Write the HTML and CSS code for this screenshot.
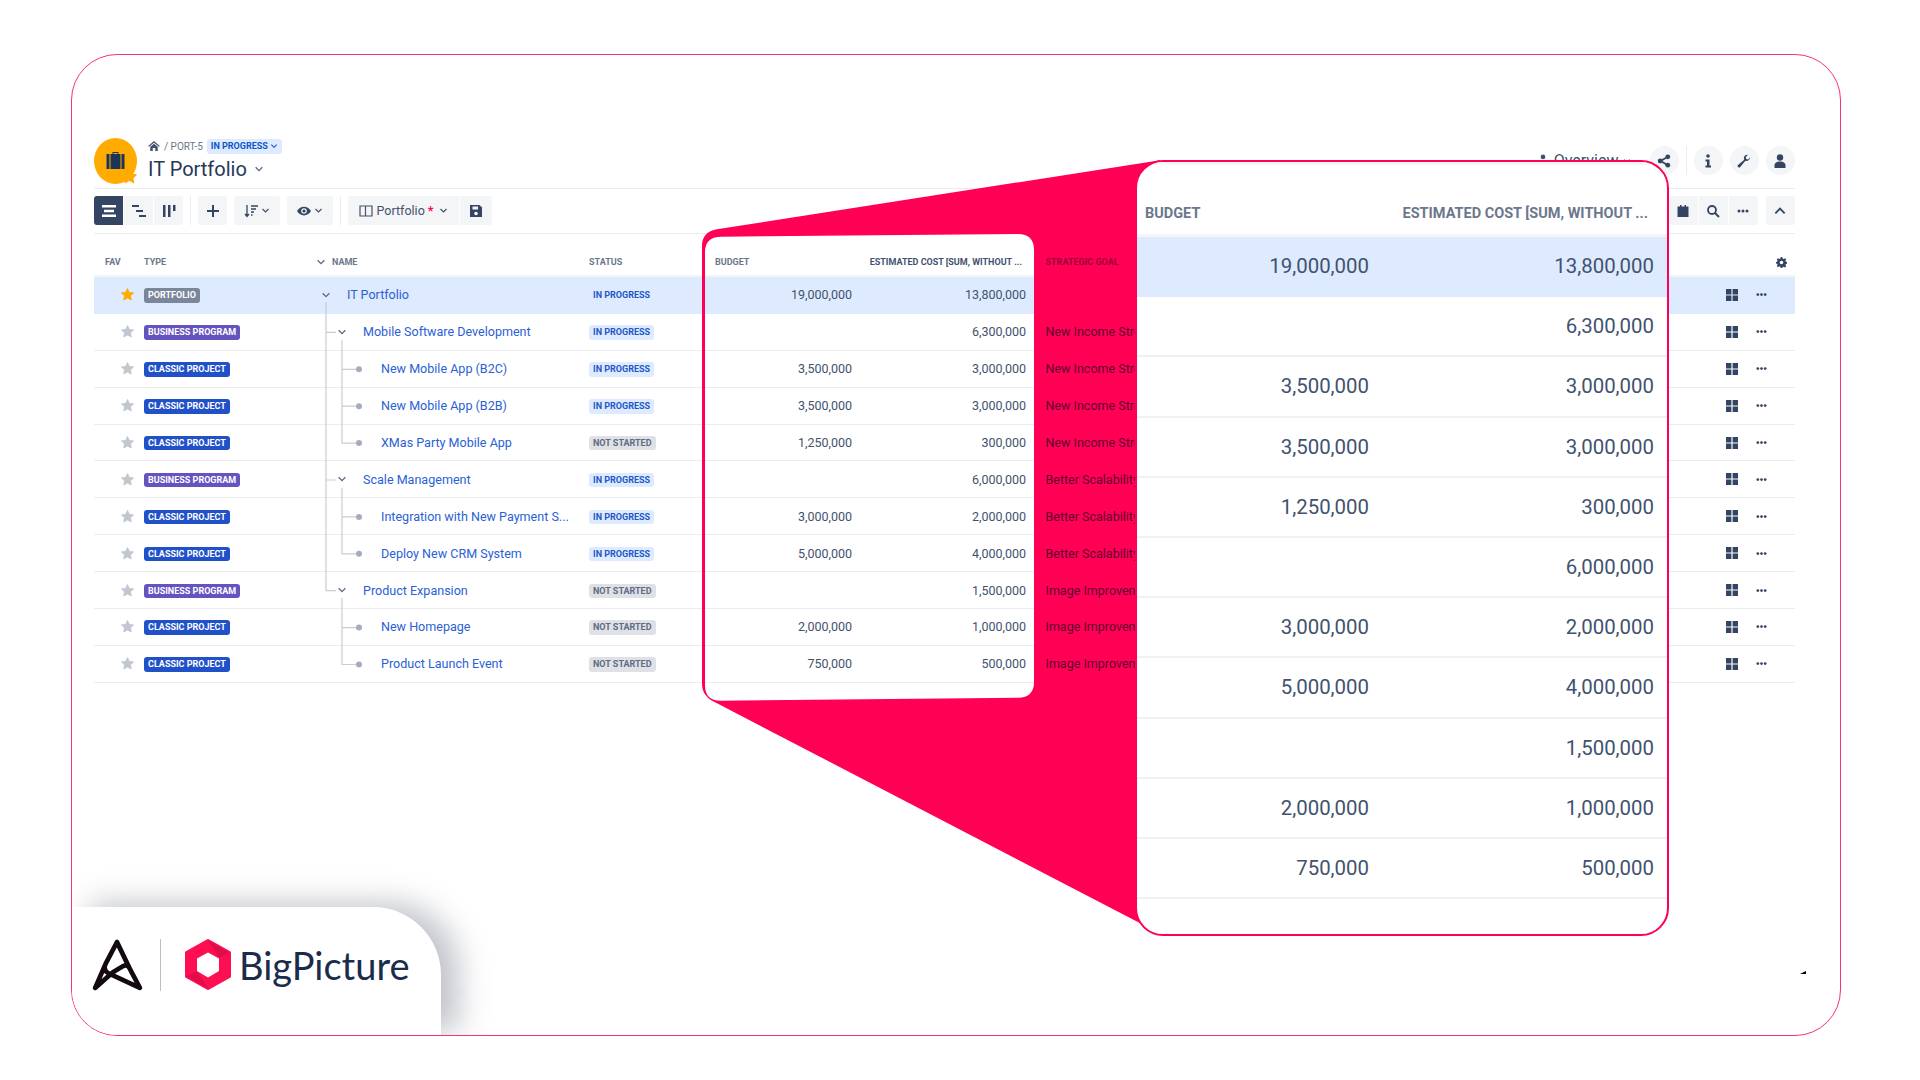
FILE: index.html
```html
<!DOCTYPE html>
<html lang="en">
<head>
  <meta charset="UTF-8">
  <title>BigPicture - IT Portfolio</title>
  <link rel="stylesheet" href="styles.css">
</head>
<body>
  <svg class="defs" width="0" height="0">
    <defs>
      <symbol id="star" viewBox="0 0 24 24"><path d="M12 2.5l2.9 6.2 6.8.8-5 4.6 1.3 6.7-6-3.4-6 3.4 1.3-6.7-5-4.6 6.8-.8z" stroke="currentColor" stroke-width="1.5" stroke-linejoin="round" fill="currentColor"/></symbol>
      <symbol id="chev" viewBox="0 0 12 12"><path d="M2 4l4 4 4-4" fill="none" stroke="currentColor" stroke-width="1.6"/></symbol>
      <symbol id="grid" viewBox="0 0 12 12"><path d="M0 0h5.4v5.4H0zM6.6 0H12v5.4H6.6zM0 6.6h5.4V12H0zM6.6 6.6H12V12H6.6z" fill="currentColor"/></symbol>
      <symbol id="dots" viewBox="0 0 12 12"><circle cx="2" cy="6" r="1.5" fill="currentColor"/><circle cx="6" cy="6" r="1.5" fill="currentColor"/><circle cx="10" cy="6" r="1.5" fill="currentColor"/></symbol>
    </defs>
  </svg>

  <div class="page">
    <div class="frame">
      <header class="top">
        <div class="avatar">
          <svg class="case" viewBox="0 0 18 18"><path d="M6 3V1h6v2h-1V2H7v1zM0 3h3v15H0zM4 3h10v15H4zM15 3h3v15h-3z" fill="#1c3557"/></svg>
          <svg class="avatar-star"><use href="#star"/></svg>
        </div>
        <div class="title-block">
          <div class="crumbs">
            <svg class="home" viewBox="0 0 14 12"><path d="M7 0l7 6-1 1-6-5-6 5-1-1zM2.5 7L7 3.2 11.5 7v5H8.5V8.500h-3V12h-3z" fill="#42526e"/></svg>
            <span>/ PORT-5</span>
            <span class="crumb-status">IN PROGRESS <svg class="ic8"><use href="#chev"/></svg></span>
          </div>
          <h1>IT Portfolio <svg class="ic10"><use href="#chev"/></svg></h1>
        </div>
        <div class="top-right">
          <span class="overview">
            <svg class="ic14" viewBox="0 0 12 12"><circle cx="6" cy="2.500" r="2" fill="#42526e"/><path d="M1 7h10v1.500H7V12H5V8.500H1z" fill="#42526e"/></svg>
            Overview <svg class="ic8"><use href="#chev"/></svg>
          </span>
          <span class="round">
            <svg viewBox="0 0 14 14"><path d="M10.500 3L3.500 7l7 4" fill="none" stroke="#344563" stroke-width="1.800"/><circle cx="10.800" cy="2.800" r="2.400" fill="#344563"/><circle cx="3.200" cy="7" r="2.400" fill="#344563"/><circle cx="10.800" cy="11.200" r="2.400" fill="#344563"/></svg>
          </span>
          <span class="vsep"></span>
          <span class="round">
            <svg viewBox="0 0 14 14"><circle cx="7" cy="2" r="1.800" fill="#344563"/><path d="M4.500 5.500H8.500V11.500H10V13.500H4.500V11.500H6V7.500H4.500z" fill="#344563"/></svg>
          </span>
          <span class="round">
            <svg viewBox="0 0 14 14"><path d="M13 3.500a3.500 3.500 0 0 1-4.600 3.300L3.300 13a1.500 1.500 0 0 1-2.300-2.100l6.200-5.200A3.500 3.500 0 0 1 11 .8L8.800 3l.4 2 2 .4L13.200 3z" fill="#344563"/></svg>
          </span>
          <span class="round">
            <svg viewBox="0 0 14 14"><circle cx="7" cy="3.500" r="3.200" fill="#344563"/><path d="M1.500 14v-2.500C1.500 8.800 4 7.500 7 7.500s5.500 1.300 5.500 4V14z" fill="#344563"/></svg>
          </span>
        </div>
      </header>

      <div class="toolbar">
        <div class="group">
          <button class="tool active"><svg viewBox="0 0 14 14"><path d="M0 1h14v2.500H0zM2 5.800h10v2.500H2zM0 10.500h14V13H0z" fill="#fff"/></svg></button>
          <button class="tool"><svg viewBox="0 0 14 14"><path d="M0 1h7v2H0zM4 6h7v2H4zM7 11h7v2H7z" fill="#344563"/></svg></button>
          <button class="tool"><svg viewBox="0 0 14 14"><path d="M1 1h2.500v12H1zM6 1h2.500v12H6zM11 1h2.500v6H11z" fill="#344563"/></svg></button>
        </div>
        <span class="vsep"></span>
        <button class="tool solo"><svg viewBox="0 0 14 14"><path d="M6 1h2v5h5v2H8v5H6V8H1V6h5z" fill="#344563"/></svg></button>
        <button class="tool wide">
          <svg viewBox="0 0 14 14"><path d="M3 1v11M1 10l2 2.500L5 10M7 2h7M7 5h5M7 8h3M7 11h1.500" fill="none" stroke="#344563" stroke-width="1.300"/></svg>
          <svg class="ic8"><use href="#chev"/></svg>
        </button>
        <button class="tool wide">
          <svg viewBox="0 0 16 14"><path d="M0 7c2-3.500 5-5 8-5s6 1.500 8 5c-2 3.500-5 5-8 5S2 10.500 0 7z" fill="#344563"/><circle cx="8" cy="7" r="3.200" fill="#f4f5f7"/><circle cx="8" cy="7" r="1.800" fill="#344563"/></svg>
          <svg class="ic8"><use href="#chev"/></svg>
        </button>
        <span class="vsep"></span>
        <div class="group">
          <button class="tool portfolio">
            <svg viewBox="0 0 14 14"><path d="M1 2h12v10H1zM6.500 2v10" fill="none" stroke="#42526e" stroke-width="1.200"/></svg>
            Portfolio <b>*</b> <svg class="ic8"><use href="#chev"/></svg>
          </button>
          <button class="tool save"><svg viewBox="0 0 14 14"><path d="M1 1h9.500L13 3.500V13H1z" fill="#344563"/><path d="M3.500 2.500h5.500v3H3.500z" fill="#f4f5f7"/><circle cx="7" cy="9.500" r="1.800" fill="#f4f5f7"/></svg></button>
        </div>
        <div class="tools-right">
          <div class="group">
            <button class="tool"><svg viewBox="0 0 14 14"><path d="M1.500 2.500H4V1h1.500v1.500h3V1H10v1.500h2.500V13h-11z" fill="#344563"/></svg></button>
            <button class="tool"><svg viewBox="0 0 14 14"><circle cx="6" cy="6" r="4" fill="none" stroke="#344563" stroke-width="1.800"/><path d="M9 9l4 4" stroke="#344563" stroke-width="2"/></svg></button>
            <button class="tool"><svg class="ic12"><use href="#dots"/></svg></button>
          </div>
          <button class="tool solo"><svg viewBox="0 0 12 12"><path d="M2 8l4-4 4 4" fill="none" stroke="#344563" stroke-width="1.600"/></svg></button>
        </div>
      </div>

      <div class="table">
        <div class="row head">
          <span class="fav-h">FAV</span>
          <span>TYPE</span>
          <span class="name-h"><svg class="ic10"><use href="#chev"/></svg> NAME</span>
          <span>STATUS</span>
          <span class="budget-h">BUDGET</span>
          <span class="num">ESTIMATED COST [SUM, WITHOUT ...</span>
          <span class="goal">STRATEGIC GOAL</span>
          <span class="acts"><svg class="gear" viewBox="0 0 14 14"><path d="M6 0h2l.4 1.800 1.500.7L11.500 1.500 13 3l-1 1.600.6 1.500L14 6.500v2l-1.400.3-.6 1.500 1 1.600-1.500 1.500-1.600-1-1.500.6L8 14H6l-.4-1.500-1.500-.6-1.600 1L1 11.400l1-1.600-.6-1.500L0 8.500v-2l1.400-.4.6-1.500L1 3l1.500-1.500 1.600 1 1.500-.7z" fill="#344563"/><circle cx="7" cy="7" r="2.200" fill="#fff"/></svg></span>
        </div>

        <div class="row selected">
          <span class="fav on"><svg><use href="#star"/></svg></span>
          <span><em class="type portfolio-t">PORTFOLIO</em></span>
          <a class="name l0"><svg class="ic10"><use href="#chev"/></svg>IT Portfolio</a>
          <span><em class="status plain">IN PROGRESS</em></span>
          <span class="num">19,000,000</span>
          <span class="num">13,800,000</span>
          <span class="goal"></span>
          <span class="acts"><svg class="ic12"><use href="#grid"/></svg><svg class="ic11"><use href="#dots"/></svg></span>
        </div>
        <div class="row">
          <span class="fav"><svg><use href="#star"/></svg></span>
          <span><em class="type program">BUSINESS PROGRAM</em></span>
          <a class="name l1"><svg class="ic10"><use href="#chev"/></svg>Mobile Software Development</a>
          <span><em class="status">IN PROGRESS</em></span>
          <span class="num"></span>
          <span class="num">6,300,000</span>
          <span class="goal">New Income Streams</span>
          <span class="acts"><svg class="ic12"><use href="#grid"/></svg><svg class="ic11"><use href="#dots"/></svg></span>
        </div>
        <div class="row">
          <span class="fav"><svg><use href="#star"/></svg></span>
          <span><em class="type project">CLASSIC PROJECT</em></span>
          <a class="name l2">New Mobile App (B2C)</a>
          <span><em class="status">IN PROGRESS</em></span>
          <span class="num">3,500,000</span>
          <span class="num">3,000,000</span>
          <span class="goal">New Income Streams</span>
          <span class="acts"><svg class="ic12"><use href="#grid"/></svg><svg class="ic11"><use href="#dots"/></svg></span>
        </div>
        <div class="row">
          <span class="fav"><svg><use href="#star"/></svg></span>
          <span><em class="type project">CLASSIC PROJECT</em></span>
          <a class="name l2">New Mobile App (B2B)</a>
          <span><em class="status">IN PROGRESS</em></span>
          <span class="num">3,500,000</span>
          <span class="num">3,000,000</span>
          <span class="goal">New Income Streams</span>
          <span class="acts"><svg class="ic12"><use href="#grid"/></svg><svg class="ic11"><use href="#dots"/></svg></span>
        </div>
        <div class="row">
          <span class="fav"><svg><use href="#star"/></svg></span>
          <span><em class="type project">CLASSIC PROJECT</em></span>
          <a class="name l2">XMas Party Mobile App</a>
          <span><em class="status todo">NOT STARTED</em></span>
          <span class="num">1,250,000</span>
          <span class="num">300,000</span>
          <span class="goal">New Income Streams</span>
          <span class="acts"><svg class="ic12"><use href="#grid"/></svg><svg class="ic11"><use href="#dots"/></svg></span>
        </div>
        <div class="row">
          <span class="fav"><svg><use href="#star"/></svg></span>
          <span><em class="type program">BUSINESS PROGRAM</em></span>
          <a class="name l1"><svg class="ic10"><use href="#chev"/></svg>Scale Management</a>
          <span><em class="status">IN PROGRESS</em></span>
          <span class="num"></span>
          <span class="num">6,000,000</span>
          <span class="goal">Better Scalability</span>
          <span class="acts"><svg class="ic12"><use href="#grid"/></svg><svg class="ic11"><use href="#dots"/></svg></span>
        </div>
        <div class="row">
          <span class="fav"><svg><use href="#star"/></svg></span>
          <span><em class="type project">CLASSIC PROJECT</em></span>
          <a class="name l2">Integration with New Payment S...</a>
          <span><em class="status">IN PROGRESS</em></span>
          <span class="num">3,000,000</span>
          <span class="num">2,000,000</span>
          <span class="goal">Better Scalability</span>
          <span class="acts"><svg class="ic12"><use href="#grid"/></svg><svg class="ic11"><use href="#dots"/></svg></span>
        </div>
        <div class="row">
          <span class="fav"><svg><use href="#star"/></svg></span>
          <span><em class="type project">CLASSIC PROJECT</em></span>
          <a class="name l2">Deploy New CRM System</a>
          <span><em class="status">IN PROGRESS</em></span>
          <span class="num">5,000,000</span>
          <span class="num">4,000,000</span>
          <span class="goal">Better Scalability</span>
          <span class="acts"><svg class="ic12"><use href="#grid"/></svg><svg class="ic11"><use href="#dots"/></svg></span>
        </div>
        <div class="row">
          <span class="fav"><svg><use href="#star"/></svg></span>
          <span><em class="type program">BUSINESS PROGRAM</em></span>
          <a class="name l1"><svg class="ic10"><use href="#chev"/></svg>Product Expansion</a>
          <span><em class="status todo">NOT STARTED</em></span>
          <span class="num"></span>
          <span class="num">1,500,000</span>
          <span class="goal">Image Improvement</span>
          <span class="acts"><svg class="ic12"><use href="#grid"/></svg><svg class="ic11"><use href="#dots"/></svg></span>
        </div>
        <div class="row">
          <span class="fav"><svg><use href="#star"/></svg></span>
          <span><em class="type project">CLASSIC PROJECT</em></span>
          <a class="name l2">New Homepage</a>
          <span><em class="status todo">NOT STARTED</em></span>
          <span class="num">2,000,000</span>
          <span class="num">1,000,000</span>
          <span class="goal">Image Improvement</span>
          <span class="acts"><svg class="ic12"><use href="#grid"/></svg><svg class="ic11"><use href="#dots"/></svg></span>
        </div>
        <div class="row">
          <span class="fav"><svg><use href="#star"/></svg></span>
          <span><em class="type project">CLASSIC PROJECT</em></span>
          <a class="name l2">Product Launch Event</a>
          <span><em class="status todo">NOT STARTED</em></span>
          <span class="num">750,000</span>
          <span class="num">500,000</span>
          <span class="goal">Image Improvement</span>
          <span class="acts"><svg class="ic12"><use href="#grid"/></svg><svg class="ic11"><use href="#dots"/></svg></span>
        </div>
      </div>

      <div class="brand">
        <svg class="appfire" viewBox="0 0 50 50"><path d="M25 3L37 28M25 3L14 24Q11 30 17 33L47 47L37 28Q35 24 31 26L21 32L4 47L14 24" fill="none" stroke="#120a10" stroke-width="4.500" stroke-linejoin="round" stroke-linecap="round"/></svg>
        <span class="brand-sep"></span>
        <svg class="hex" viewBox="0 0 46 51"><path d="M23 1.500L44.500 13.500V37.500L23 49.500L1.500 37.500V13.500z" fill="#ff0f52" stroke="#ff0f52" stroke-width="3" stroke-linejoin="round"/><path d="M23 1.500L44.500 13.500L34 19zM1.500 37.500L12 32l11 17.500z" fill="#e00d4a"/><path d="M23 13.500L34 19.500V32L23 38.500L12 32V19.500z" fill="#fff"/></svg>
        <span class="brand-name">BigPicture</span>
      </div>
    </div>

    <svg class="tree" viewBox="0 0 1920 1080">
      <g fill="none" stroke="#c8ccd4" stroke-width="1.200">
        <path d="M326 302V590.700H336M326 332.400H336M326 480H336"/>
        <path d="M342 340V443.100H356M342 369.300H356M342 406.200H356"/>
        <path d="M342 488V553.800H356M342 516.900H356"/>
        <path d="M342 598V664.500H356M342 627.600H356"/>
      </g>
      <g fill="#a5adba">
        <circle cx="359" cy="369.300" r="3"/><circle cx="359" cy="406.200" r="3"/><circle cx="359" cy="443.100" r="3"/>
        <circle cx="359" cy="516.900" r="3"/><circle cx="359" cy="553.800" r="3"/>
        <circle cx="359" cy="627.600" r="3"/><circle cx="359" cy="664.500" r="3"/>
      </g>
    </svg>

    <svg class="funnel" viewBox="0 0 1920 1080">
      <path fill-rule="evenodd" fill="#ff0055" d="M717 229.300L1157 160.700L1160 160V934L1147 926.700L717 703.300Q702 697 702 684V246Q702 232 717 229.300ZM721 236.700Q705 237 705 252V685Q705 701 721 700.700L1018 697.700Q1034 697.500 1034 682V250Q1034 234 1018 234Z"/>
    </svg>

    <div class="lens">
      <div class="lens-head">
        <span>BUDGET</span>
        <span class="lens-cost">ESTIMATED COST [SUM, WITHOUT ...</span>
      </div>
      <div class="lens-row selected"><span>19,000,000</span><span>13,800,000</span></div>
      <div class="lens-row"><span></span><span>6,300,000</span></div>
      <div class="lens-row"><span>3,500,000</span><span>3,000,000</span></div>
      <div class="lens-row"><span>3,500,000</span><span>3,000,000</span></div>
      <div class="lens-row"><span>1,250,000</span><span>300,000</span></div>
      <div class="lens-row"><span></span><span>6,000,000</span></div>
      <div class="lens-row"><span>3,000,000</span><span>2,000,000</span></div>
      <div class="lens-row"><span>5,000,000</span><span>4,000,000</span></div>
      <div class="lens-row"><span></span><span>1,500,000</span></div>
      <div class="lens-row"><span>2,000,000</span><span>1,000,000</span></div>
      <div class="lens-row"><span>750,000</span><span>500,000</span></div>
    </div>

    <span class="speck"></span>
  </div>
</body>
</html>
```

FILE: styles.css
```css
* { box-sizing: border-box; }
html, body { margin: 0; height: 100%; overflow: hidden; background: #fff; }
body { font-family: Roboto, "Liberation Sans", sans-serif; color: #42526e; }
.defs { position: absolute; }
.page { position: relative; width: 1920px; height: 1080px; padding: 54px 79px 0 71px; }

.frame {
  position: relative;
  height: 982px;
  padding: 83px 45.500px 0 22px;
  border: 1.5px solid #f8336f;
  border-radius: 46px;
  overflow: hidden;
}

/* top bar */
.top { display: flex; height: 51px; border-bottom: 1px solid #ebecf0; }
.avatar { position: relative; width: 43px; height: 46px; border-radius: 50%; background: #ffab00; display: flex; align-items: center; justify-content: center; }
.case { width: 19px; height: 18px; margin-top: -3px; }
.avatar-star { position: absolute; right: -1px; bottom: -1px; width: 17px; height: 17px; color: #ffab00; }
.title-block { margin-left: 11px; }
.crumbs { display: flex; align-items: center; gap: 4px; height: 16px; font-size: 10px; color: #6b778c; }
.home { width: 12px; height: 10px; }
.crumb-status { display: flex; align-items: center; gap: 2px; height: 15px; padding: 0 4px; border-radius: 3px; background: #deebff; color: #0b55cf; font-size: 9px; font-weight: 700; white-space: nowrap; }
h1 { display: flex; align-items: center; gap: 7px; margin: 2px 0 0; font-size: 20px; line-height: 26px; font-weight: 400; color: #253858; }
.ic8 { width: 8px; height: 8px; }
.ic10 { width: 10px; height: 10px; color: #5e6c84; flex: none; }
.ic11 { width: 11px; height: 11px; color: #344563; }
.ic12 { width: 12px; height: 12px; color: #344563; }
.ic14 { width: 14px; height: 14px; }
.top-right { display: flex; align-items: center; gap: 7px; height: 29px; margin: 8px 0 0 auto; }
.overview { display: flex; align-items: center; gap: 4px; margin-right: 12px; font-size: 16px; color: #42526e; }
.round { display: flex; align-items: center; justify-content: center; width: 29px; height: 29px; border-radius: 50%; background: #f4f5f7; }
.round svg { width: 14px; height: 14px; }
.vsep { width: 1px; height: 29px; background: #ebecf0; }

/* toolbar */
.toolbar { display: flex; align-items: center; gap: 7px; height: 45px; padding-bottom: 1px; border-bottom: 1px solid #ebecf0; }
.group { display: flex; gap: 1px; }
.tool { display: flex; align-items: center; justify-content: center; gap: 3px; width: 29px; height: 29px; padding: 0; border: 0; border-radius: 0; background: #f4f5f7; color: #42526e; font: 400 12.500px Roboto, sans-serif; }
.tool svg { width: 14px; height: 14px; }
.tool .ic8 { width: 9px; height: 9px; }
.tool .ic12 { width: 12px; height: 12px; }
.group .tool:first-child { border-radius: 3px 0 0 3px; }
.group .tool:last-child { border-radius: 0 3px 3px 0; }
.tool.active { background: #344563; }
.tool.solo { border-radius: 3px; }
.tool.wide { width: 46px; border-radius: 3px; }
.tool.portfolio { width: 111px; gap: 4px; }
.tool.portfolio b { color: #ff0055; font-weight: 700; margin: 0 2px 0 -1px; }
.tool.save { width: 32px; }
.tools-right { display: flex; gap: 8px; margin-left: auto; }

/* table */
.row {
  display: grid;
  grid-template-columns: 50px 177px 268px 113px 150px 174px 110px 1fr;
  align-items: center;
  height: 36.900px;
  border-bottom: 1px solid #ebecf0;
  font-size: 12.500px;
}
.row.selected { background: #deebff; border-bottom-color: #deebff; }
.row.head { height: 43px; padding-top: 15px; border-bottom: 2px solid #f4f5f7; font-size: 9px; font-weight: 700; color: #6b778c; align-items: center; }
.fav-h { padding-left: 11px; }
.name-h { display: flex; align-items: center; gap: 6px; margin-left: -5px; }
.budget-h { padding-left: 13px; }
.row.head .num { padding-right: 4px; }
.num { text-align: right; white-space: nowrap; color: #42526e; }
.goal { position: relative; z-index: 3; padding-left: 19.500px; white-space: nowrap; color: #5e0030; }
.head .goal { color: #9a003c; }
.acts { display: flex; align-items: center; justify-content: flex-end; gap: 18px; padding-right: 28px; }
.gear { width: 11px; height: 11px; margin-right: -20px; }
.fav { display: flex; justify-content: flex-end; padding-right: 9px; color: #c1c7d0; }
.fav svg { width: 15px; height: 15px; }
.fav.on { color: #ffab00; }
.type, .status { display: inline-block; height: 14.500px; padding: 0 4px; border-radius: 3px; font-style: normal; font-size: 9px; line-height: 14.500px; font-weight: 700; white-space: nowrap; vertical-align: middle; }
.type { color: #fff; }
.portfolio-t { background: #7a869a; }
.program { background: #6554c0; }
.project { background: #2151c9; }
.status { background: #deebff; color: #2357c9; }
.status.plain { background: none; }
.status.todo { background: #dfe1e6; color: #5e6c84; }
.name { display: flex; align-items: center; color: #2a5fd6; font-size: 12.550px; white-space: nowrap; }
.name svg { margin-right: 16px; }
.l1 { padding-left: 16px; }
.l2 { padding-left: 60px; }
.tree, .funnel { position: absolute; left: 0; top: 0; width: 1920px; height: 1080px; pointer-events: none; }
.tree { z-index: 1; }
.funnel { z-index: 2; }

/* magnified columns */
.lens {
  position: absolute;
  left: 1135px;
  top: 160px;
  z-index: 4;
  width: 534px;
  height: 776px;
  border: 2px solid #ff0055;
  border-radius: 28px;
  background: #fff;
  overflow: hidden;
}
.lens-head { display: grid; grid-template-columns: 232px 1fr; align-items: end; height: 75px; padding: 0 19px 12px 8px; border-top: 3px solid #f4f5f7; border-bottom: 3px solid #f4f5f7; font-size: 14.500px; font-weight: 700; color: #6b778c; }
.lens-cost { text-align: right; white-space: nowrap; }
.lens-row { display: grid; grid-template-columns: 232px 1fr; align-items: center; height: 60.200px; padding-right: 13px; border-bottom: 2px solid #f0f1f4; font-size: 20.400px; color: #42526e; }
.lens-row span { text-align: right; }
.lens-row.selected { background: #deebff; border-bottom-color: #deebff; }

/* logo corner */
.brand { position: absolute; left: 0; bottom: 0; display: flex; align-items: center; width: 369px; height: 128px; padding: 0 0 13px 19px; border-radius: 0 68px 0 0; background: #fff; box-shadow: 18px -4px 30px rgba(120, 125, 140, .45); }
.appfire { width: 52px; height: 52px; }
.brand-sep { width: 1px; height: 52px; margin: 0 24px 0 17px; background: #b9bfca; }
.hex { width: 46px; height: 51px; }
.brand-name { margin-left: 8px; font-family: Lato, "Open Sans", sans-serif; font-size: 38px; font-weight: 400; color: #1b2b4b; }
.speck { position: absolute; left: 1800px; top: 971px; width: 6px; height: 3px; background: #000; clip-path: polygon(0 100%, 100% 0, 100% 100%); }
```
